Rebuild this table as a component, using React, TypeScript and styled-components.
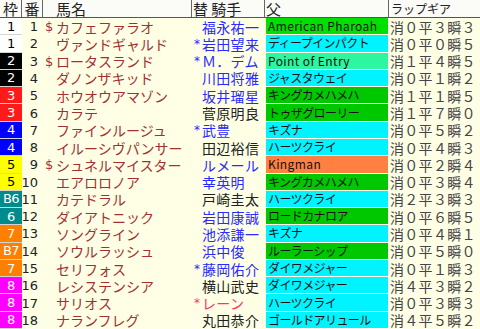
import React from 'react'
import styled, { createGlobalStyle } from 'styled-components'

const GlobalStyle = createGlobalStyle`
  html, body {
    margin: 0;
    padding: 0;
    background: #ffffe6;
  }
  body {
    font-family: "Noto Sans CJK JP", "DejaVu Sans", sans-serif;
    line-height: 1;
  }
`

interface Runner {
  frame: string
  no: number
  mark: string
  name: string
  sub: string
  jockey: string
  jockeyTone: 'blue' | 'black' | 'red'
  sire: string
  sireColor: string
  lap: string
}

const FRAME_BG: Record<string, string> = {
  '1': '#ffffff',
  '2': '#000000',
  '3': '#ff1a1a',
  '4': '#0000ff',
  '5': '#ffff00',
  '6': '#008b8b',
  '7': '#ff8000',
  '8': '#ff00ff',
}

const FRAME_FG: Record<string, string> = {
  '1': '#000',
  '5': '#000',
}

const JOCKEY_COLOR = {
  blue: '#2a2aff',
  black: '#222222',
  red: '#ff3366',
}

const GREEN = '#00c800'
const CYAN = '#00f4ff'

const runners: Runner[] = [
  { frame: '1', no: 1, mark: '$', name: 'カフェファラオ', sub: '', jockey: '福永祐一', jockeyTone: 'blue', sire: 'American Pharoah', sireColor: '#00e000', lap: '消０平３瞬３' },
  { frame: '1', no: 2, mark: '', name: 'ヴァンドギャルド', sub: '*', jockey: '岩田望来', jockeyTone: 'blue', sire: 'ディープインパクト', sireColor: CYAN, lap: '消０平０瞬５' },
  { frame: '2', no: 3, mark: '$', name: 'ロータスランド', sub: '*', jockey: 'Ｍ．デム', jockeyTone: 'blue', sire: 'Point of Entry', sireColor: '#2ef5a0', lap: '消１平４瞬５' },
  { frame: '2', no: 4, mark: '', name: 'ダノンザキッド', sub: '', jockey: '川田将雅', jockeyTone: 'blue', sire: 'ジャスタウェイ', sireColor: CYAN, lap: '消０平１瞬２' },
  { frame: '3', no: 5, mark: '', name: 'ホウオウアマゾン', sub: '', jockey: '坂井瑠星', jockeyTone: 'blue', sire: 'キングカメハメハ', sireColor: GREEN, lap: '消１平１瞬５' },
  { frame: '3', no: 6, mark: '', name: 'カラテ', sub: '', jockey: '菅原明良', jockeyTone: 'black', sire: 'トゥザグローリー', sireColor: GREEN, lap: '消１平７瞬０' },
  { frame: '4', no: 7, mark: '', name: 'ファインルージュ', sub: '*', jockey: '武豊', jockeyTone: 'blue', sire: 'キズナ', sireColor: CYAN, lap: '消０平５瞬２' },
  { frame: '4', no: 8, mark: '', name: 'イルーシヴパンサー', sub: '', jockey: '田辺裕信', jockeyTone: 'black', sire: 'ハーツクライ', sireColor: CYAN, lap: '消０平４瞬３' },
  { frame: '5', no: 9, mark: '$', name: 'シュネルマイスター', sub: '', jockey: 'ルメール', jockeyTone: 'blue', sire: 'Kingman', sireColor: '#ff8040', lap: '消０平２瞬４' },
  { frame: '5', no: 10, mark: '', name: 'エアロロノア', sub: '', jockey: '幸英明', jockeyTone: 'blue', sire: 'キングカメハメハ', sireColor: GREEN, lap: '消０平３瞬４' },
  { frame: 'B6', no: 11, mark: '', name: 'カテドラル', sub: '', jockey: '戸崎圭太', jockeyTone: 'black', sire: 'ハーツクライ', sireColor: CYAN, lap: '消２平３瞬３' },
  { frame: '6', no: 12, mark: '', name: 'ダイアトニック', sub: '', jockey: '岩田康誠', jockeyTone: 'blue', sire: 'ロードカナロア', sireColor: GREEN, lap: '消０平６瞬５' },
  { frame: '7', no: 13, mark: '', name: 'ソングライン', sub: '', jockey: '池添謙一', jockeyTone: 'blue', sire: 'キズナ', sireColor: CYAN, lap: '消０平４瞬１' },
  { frame: 'B7', no: 14, mark: '', name: 'ソウルラッシュ', sub: '', jockey: '浜中俊', jockeyTone: 'blue', sire: 'ルーラーシップ', sireColor: GREEN, lap: '消０平５瞬０' },
  { frame: '7', no: 15, mark: '', name: 'セリフォス', sub: '*', jockey: '藤岡佑介', jockeyTone: 'blue', sire: 'ダイワメジャー', sireColor: CYAN, lap: '消０平１瞬３' },
  { frame: '8', no: 16, mark: '', name: 'レシステンシア', sub: '', jockey: '横山武史', jockeyTone: 'black', sire: 'ダイワメジャー', sireColor: CYAN, lap: '消４平３瞬２' },
  { frame: '8', no: 17, mark: '', name: 'サリオス', sub: '*', jockey: 'レーン', jockeyTone: 'red', sire: 'ハーツクライ', sireColor: CYAN, lap: '消０平３瞬３' },
  { frame: '8', no: 18, mark: '', name: 'ナランフレグ', sub: '', jockey: '丸田恭介', jockeyTone: 'black', sire: 'ゴールドアリュール', sireColor: CYAN, lap: '消４平５瞬２' },
]

const COLUMNS = '22px 21px 149px 73px 124px 91px'

const Table = styled.div`
  width: 480px;
  height: 329px;
  display: flex;
  flex-direction: column;
  overflow: hidden;
`

const Header = styled.div`
  height: 17px;
  flex: none;
  display: grid;
  grid-template-columns: ${COLUMNS};
  background: #fbfbf8;
  border-bottom: 1px solid #555;
`

const HeadCell = styled.div<{ $align?: string; $pad?: number; $small?: boolean }>`
  border-right: 1px solid #666;
  display: flex;
  align-items: center;
  justify-content: ${p => p.$align || 'flex-start'};
  padding-left: ${p => p.$pad || 0}px;
  font-size: ${p => (p.$small ? 12 : 15)}px;
  color: #222;
  white-space: pre;

  &:last-child {
    border-right: none;
  }
`

const Body = styled.div`
  flex: 1;
  min-height: 0;
  display: grid;
  grid-template-rows: repeat(18, minmax(0, 1fr));
`

const Row = styled.div`
  display: grid;
  grid-template-columns: ${COLUMNS};
  min-height: 0;
`

const FrameCell = styled.div<{ $bg: string; $fg: string }>`
  background: ${p => p.$bg};
  color: ${p => p.$fg};
  border-bottom: 1px solid #d4d4cc;
  display: flex;
  align-items: center;
  justify-content: center;
  font-family: "DejaVu Sans", sans-serif;
  font-size: 13px;
  letter-spacing: -0.5px;
`

const NumCell = styled.div`
  display: flex;
  align-items: center;
  justify-content: flex-end;
  padding-right: 5px;
  font-family: "DejaVu Sans", sans-serif;
  font-size: 13px;
  color: #222;
`

const NameCell = styled.div`
  display: flex;
  align-items: center;
  padding-left: 2px;
  color: #a33030;
  font-size: 14px;
  white-space: nowrap;
`

const Mark = styled.span`
  display: inline-block;
  width: 11px;
  font-family: "DejaVu Sans", sans-serif;
  font-size: 13px;
`

const JockeyCell = styled.div<{ $color: string }>`
  display: flex;
  align-items: center;
  color: ${p => p.$color};
  font-size: 14px;
  white-space: nowrap;
`

const SubMark = styled.span`
  display: inline-block;
  width: 10px;
  text-align: center;
  font-family: "DejaVu Sans", sans-serif;
  font-size: 12px;
`

const Jockey = styled.span`
  letter-spacing: 0.3px;
`

const SireCell = styled.div<{ $bg: string; $latin: boolean }>`
  background: ${p => p.$bg};
  margin: 0 1px 1px 1px;
  display: flex;
  align-items: center;
  padding-left: 2px;
  font-size: 12px;
  color: #111;
  white-space: nowrap;
  overflow: hidden;
  letter-spacing: ${p => (p.$latin ? '0.4px' : '-0.6px')};
`

const LapCell = styled.div`
  display: flex;
  align-items: center;
  padding-left: 1px;
  font-size: 14px;
  color: #444;
  letter-spacing: 0.3px;
  white-space: nowrap;
`

const App: React.FC = () => {
  return (
    <>
      <GlobalStyle />
      <Table>
        <Header>
          <HeadCell $align="center">枠</HeadCell>
          <HeadCell $align="center">番</HeadCell>
          <HeadCell $pad={13}>馬名</HeadCell>
          <HeadCell $pad={1}>替 騎手</HeadCell>
          <HeadCell $pad={1}>父</HeadCell>
          <HeadCell $pad={2} $small>ラップギア</HeadCell>
        </Header>
        <Body>
          {runners.map(r => {
            const key = r.frame.replace('B', '')
            return (
              <Row key={r.no}>
                <FrameCell $bg={FRAME_BG[key]} $fg={FRAME_FG[key] || '#fff'}>
                  {r.frame}
                </FrameCell>
                <NumCell>{r.no}</NumCell>
                <NameCell>
                  <Mark>{r.mark}</Mark>
                  {r.name}
                </NameCell>
                <JockeyCell $color={JOCKEY_COLOR[r.jockeyTone]}>
                  <SubMark>{r.sub}</SubMark>
                  <Jockey>{r.jockey}</Jockey>
                </JockeyCell>
                <SireCell $bg={r.sireColor} $latin={/^[A-Za-z]/.test(r.sire)}>
                  {r.sire}
                </SireCell>
                <LapCell>{r.lap}</LapCell>
              </Row>
            )
          })}
        </Body>
      </Table>
    </>
  )
}

export default App
